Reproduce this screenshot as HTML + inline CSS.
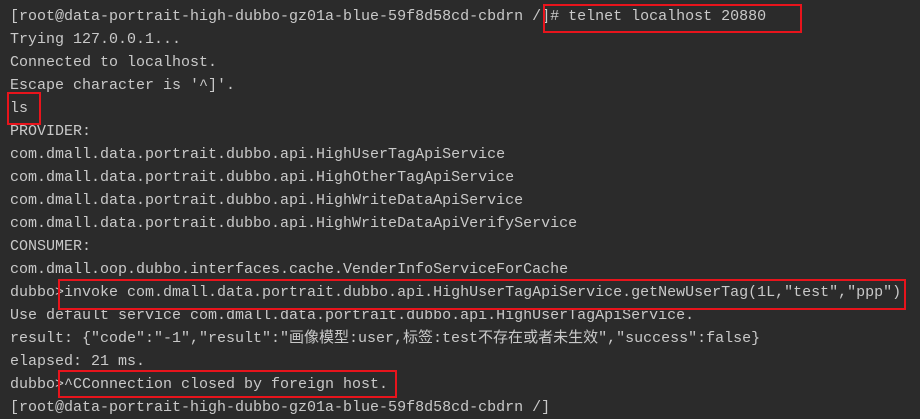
<!DOCTYPE html>
<html><head><meta charset="utf-8"><style>
body{margin:0;width:920px;height:400px;background:#2b2b2b;overflow:hidden;position:relative}
.l{position:absolute;left:10px;white-space:pre;color:#c9c9c9;font:15px/23px "Liberation Mono","Noto Sans CJK SC",monospace;}
.b{position:absolute;border:2px solid #e8141c;box-sizing:border-box}
</style></head><body>
<div class="l" style="top:-18px">[root@data-portrait-high-dubbo-gz01a-blue-59f8d58cd-cbdrn /]</div>
<div class="l" style="top:5px">[root@data-portrait-high-dubbo-gz01a-blue-59f8d58cd-cbdrn /]# telnet localhost 20880</div>
<div class="l" style="top:28px">Trying 127.0.0.1...</div>
<div class="l" style="top:51px">Connected to localhost.</div>
<div class="l" style="top:74px">Escape character is '^]'.</div>
<div class="l" style="top:97px">ls</div>
<div class="l" style="top:120px">PROVIDER:</div>
<div class="l" style="top:143px">com.dmall.data.portrait.dubbo.api.HighUserTagApiService</div>
<div class="l" style="top:166px">com.dmall.data.portrait.dubbo.api.HighOtherTagApiService</div>
<div class="l" style="top:189px">com.dmall.data.portrait.dubbo.api.HighWriteDataApiService</div>
<div class="l" style="top:212px">com.dmall.data.portrait.dubbo.api.HighWriteDataApiVerifyService</div>
<div class="l" style="top:235px">CONSUMER:</div>
<div class="l" style="top:258px">com.dmall.oop.dubbo.interfaces.cache.VenderInfoServiceForCache</div>
<div class="l" style="top:281px">dubbo>invoke com.dmall.data.portrait.dubbo.api.HighUserTagApiService.getNewUserTag(1L,"test","ppp")</div>
<div class="l" style="top:304px">Use default service com.dmall.data.portrait.dubbo.api.HighUserTagApiService.</div>
<div class="l" style="top:327px">result: {"code":"-1","result":"画像模型:user,标签:test不存在或者未生效","success":false}</div>
<div class="l" style="top:350px">elapsed: 21 ms.</div>
<div class="l" style="top:373px">dubbo>^CConnection closed by foreign host.</div>
<div class="l" style="top:396px">[root@data-portrait-high-dubbo-gz01a-blue-59f8d58cd-cbdrn /]</div>
<div class="b" style="left:543px;top:4px;width:259px;height:29px"></div>
<div class="b" style="left:7px;top:92px;width:34px;height:33px"></div>
<div class="b" style="left:58px;top:279px;width:848px;height:31px"></div>
<div class="b" style="left:58px;top:370px;width:339px;height:28px"></div>
</body></html>
